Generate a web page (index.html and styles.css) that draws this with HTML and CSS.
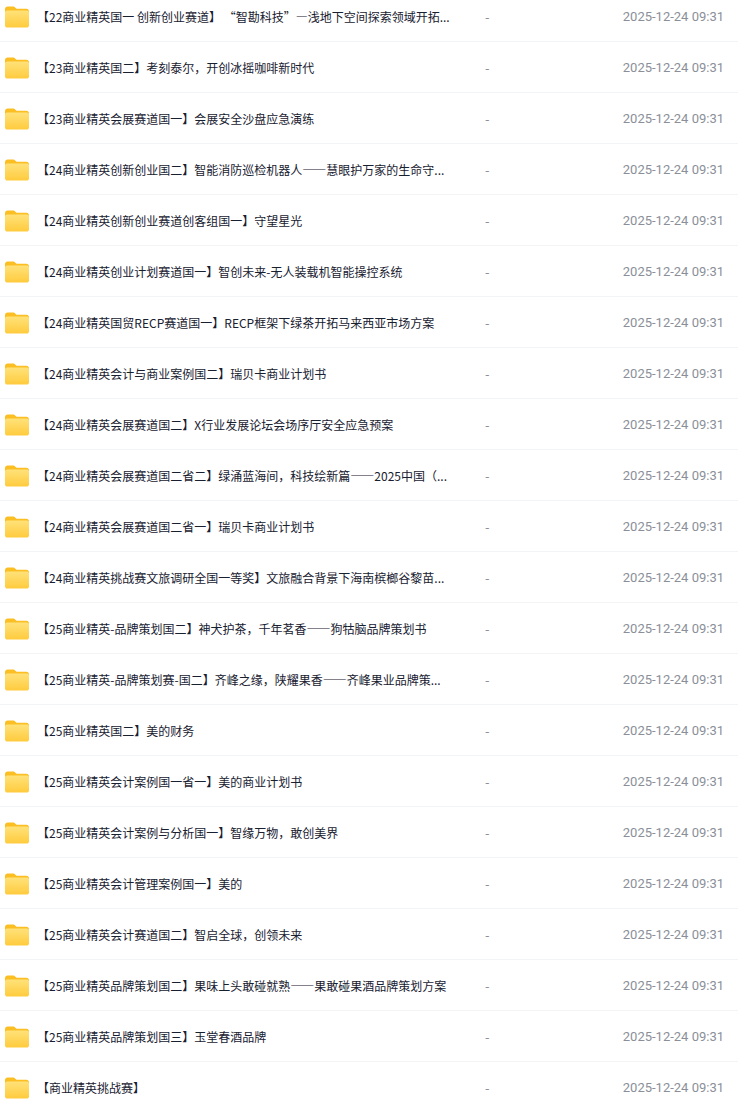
FILE: index.html
```html
<!DOCTYPE html>
<html lang="zh-CN">
<head>
    <title>文件列表</title>
    <meta charset="UTF-8">
    <meta name="viewport" content="width=device-width, initial-scale=1.0">
    <link rel="stylesheet" href="styles.css">
</head>
<body>
    <svg class="defs" width="0" height="0" aria-hidden="true">
        <defs>
            <linearGradient id="folder-front" x1="0" y1="0" x2="0" y2="1">
                <stop offset="0" stop-color="#ffe27a"/>
                <stop offset="1" stop-color="#ffcb3d"/>
            </linearGradient>
            <symbol id="folder" viewBox="0 0 24 22">
                <path d="M0 3.2C0 1.400 1.200 .5 2.600 .5h5.200c1.200 0 1.900.5 2.600 1.200l1.200 1.100h9.800c1.500 0 2.600 1 2.600 2.600v3H0z" fill="#fbbf24"/>
                <path d="M0 6.400c0-1.300.9-2 2.200-2h19.600c1.300 0 2.200.7 2.200 2v12.800c0 1.500-1 2.300-2.300 2.300H2.300C1 21.500 0 20.700 0 19.200z" fill="url(#folder-front)"/>
            </symbol>
        </defs>
    </svg>
    <ul class="file-list">
        <li class="file-row"><svg class="folder-icon"><use href="#folder"/></svg><span class="file-name">【22商业精英国一 创新创业赛道】 “智勘科技”—浅地下空间探索领域开拓...</span><span class="file-size">-</span><span class="file-date">2025-12-24 09:31</span></li>
        <li class="file-row"><svg class="folder-icon"><use href="#folder"/></svg><span class="file-name">【23商业精英国二】考刻泰尔，开创冰摇咖啡新时代</span><span class="file-size">-</span><span class="file-date">2025-12-24 09:31</span></li>
        <li class="file-row"><svg class="folder-icon"><use href="#folder"/></svg><span class="file-name">【23商业精英会展赛道国一】会展安全沙盘应急演练</span><span class="file-size">-</span><span class="file-date">2025-12-24 09:31</span></li>
        <li class="file-row"><svg class="folder-icon"><use href="#folder"/></svg><span class="file-name">【24商业精英创新创业国二】智能消防巡检机器人——慧眼护万家的生命守...</span><span class="file-size">-</span><span class="file-date">2025-12-24 09:31</span></li>
        <li class="file-row"><svg class="folder-icon"><use href="#folder"/></svg><span class="file-name">【24商业精英创新创业赛道创客组国一】守望星光</span><span class="file-size">-</span><span class="file-date">2025-12-24 09:31</span></li>
        <li class="file-row"><svg class="folder-icon"><use href="#folder"/></svg><span class="file-name">【24商业精英创业计划赛道国一】智创未来-无人装载机智能操控系统</span><span class="file-size">-</span><span class="file-date">2025-12-24 09:31</span></li>
        <li class="file-row"><svg class="folder-icon"><use href="#folder"/></svg><span class="file-name">【24商业精英国贸RECP赛道国一】RECP框架下绿茶开拓马来西亚市场方案</span><span class="file-size">-</span><span class="file-date">2025-12-24 09:31</span></li>
        <li class="file-row"><svg class="folder-icon"><use href="#folder"/></svg><span class="file-name">【24商业精英会计与商业案例国二】瑞贝卡商业计划书</span><span class="file-size">-</span><span class="file-date">2025-12-24 09:31</span></li>
        <li class="file-row"><svg class="folder-icon"><use href="#folder"/></svg><span class="file-name">【24商业精英会展赛道国二】X行业发展论坛会场序厅安全应急预案</span><span class="file-size">-</span><span class="file-date">2025-12-24 09:31</span></li>
        <li class="file-row"><svg class="folder-icon"><use href="#folder"/></svg><span class="file-name">【24商业精英会展赛道国二省二】绿涌蓝海间，科技绘新篇——2025中国（...</span><span class="file-size">-</span><span class="file-date">2025-12-24 09:31</span></li>
        <li class="file-row"><svg class="folder-icon"><use href="#folder"/></svg><span class="file-name">【24商业精英会展赛道国二省一】瑞贝卡商业计划书</span><span class="file-size">-</span><span class="file-date">2025-12-24 09:31</span></li>
        <li class="file-row"><svg class="folder-icon"><use href="#folder"/></svg><span class="file-name">【24商业精英挑战赛文旅调研全国一等奖】文旅融合背景下海南槟榔谷黎苗...</span><span class="file-size">-</span><span class="file-date">2025-12-24 09:31</span></li>
        <li class="file-row"><svg class="folder-icon"><use href="#folder"/></svg><span class="file-name">【25商业精英-品牌策划国二】神犬护茶，千年茗香——狗牯脑品牌策划书</span><span class="file-size">-</span><span class="file-date">2025-12-24 09:31</span></li>
        <li class="file-row"><svg class="folder-icon"><use href="#folder"/></svg><span class="file-name">【25商业精英-品牌策划赛-国二】齐峰之缘，陕耀果香——齐峰果业品牌策...</span><span class="file-size">-</span><span class="file-date">2025-12-24 09:31</span></li>
        <li class="file-row"><svg class="folder-icon"><use href="#folder"/></svg><span class="file-name">【25商业精英国二】美的财务</span><span class="file-size">-</span><span class="file-date">2025-12-24 09:31</span></li>
        <li class="file-row"><svg class="folder-icon"><use href="#folder"/></svg><span class="file-name">【25商业精英会计案例国一省一】美的商业计划书</span><span class="file-size">-</span><span class="file-date">2025-12-24 09:31</span></li>
        <li class="file-row"><svg class="folder-icon"><use href="#folder"/></svg><span class="file-name">【25商业精英会计案例与分析国一】智缘万物，敢创美界</span><span class="file-size">-</span><span class="file-date">2025-12-24 09:31</span></li>
        <li class="file-row"><svg class="folder-icon"><use href="#folder"/></svg><span class="file-name">【25商业精英会计管理案例国一】美的</span><span class="file-size">-</span><span class="file-date">2025-12-24 09:31</span></li>
        <li class="file-row"><svg class="folder-icon"><use href="#folder"/></svg><span class="file-name">【25商业精英会计赛道国二】智启全球，创领未来</span><span class="file-size">-</span><span class="file-date">2025-12-24 09:31</span></li>
        <li class="file-row"><svg class="folder-icon"><use href="#folder"/></svg><span class="file-name">【25商业精英品牌策划国二】果味上头敢碰就熟——果敢碰果酒品牌策划方案</span><span class="file-size">-</span><span class="file-date">2025-12-24 09:31</span></li>
        <li class="file-row"><svg class="folder-icon"><use href="#folder"/></svg><span class="file-name">【25商业精英品牌策划国三】玉堂春酒品牌</span><span class="file-size">-</span><span class="file-date">2025-12-24 09:31</span></li>
        <li class="file-row"><svg class="folder-icon"><use href="#folder"/></svg><span class="file-name">【商业精英挑战赛】</span><span class="file-size">-</span><span class="file-date">2025-12-24 09:31</span></li>
    </ul>
</body>
</html>
```

FILE: styles.css
```css
* { box-sizing: border-box; }
html, body {
    height: 100%;
    margin: 0;
    overflow: hidden;
}
body {
    font-family: "Noto Sans CJK SC", "Noto Sans", sans-serif;
    font-size: 12px;
    color: #18202f;
    background: #fff;
}
.defs {
    display: block;
}
.file-list {
    list-style: none;
    margin: -9px 0 0;
    padding: 0;
}
.file-row {
    display: flex;
    align-items: center;
    height: 51px;
    padding-left: 5px;
    border-bottom: 1px solid #f3f4f6;
}
.folder-icon {
    flex: none;
    width: 24px;
    height: 22px;
    margin: 1px 8px 0 0;
}
.file-name {
    flex: none;
    width: 412px;
    white-space: nowrap;
}
.file-size {
    flex: none;
    margin-left: 36px;
    color: #8b8f99;
    font-size: 13px;
}
.file-date {
    margin-left: auto;
    padding-right: 14px;
    color: #8b8f99;
    font-family: Roboto, sans-serif;
    font-size: 13px;
}
```
